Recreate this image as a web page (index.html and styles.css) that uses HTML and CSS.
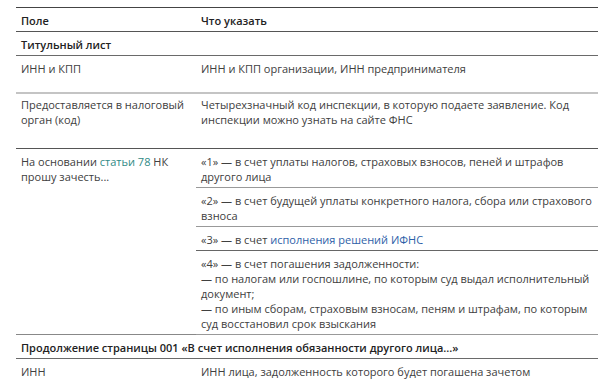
FILE: index.html
```html
<!DOCTYPE html>
<html lang="ru">
<head>
<meta charset="utf-8">
<link rel="stylesheet" href="styles.css">
</head>
<body>
<table class="tbl">
  <colgroup><col class="c1"><col class="c2"></colgroup>
  <thead>
    <tr class="head"><th>Поле</th><th>Что указать</th></tr>
  </thead>
  <tbody>
    <tr class="section"><td colspan="2">Титульный лист</td></tr>
    <tr class="tall"><td>ИНН и КПП</td><td>ИНН и КПП организации, ИНН предпринимателя</td></tr>
    <tr class="tall light"><td>Предоставляется в налоговый орган (код)</td><td>Четырехзначный код инспекции, в которую подаете заявление. Код инспекции можно узнать на сайте ФНС</td></tr>
    <tr class="sub"><td rowspan="4" class="lead">На основании <a class="teal">статьи&nbsp;78</a> НК прошу зачесть...</td><td>«1» — в счет уплаты налогов, страховых взносов, пеней и штрафов другого лица</td></tr>
    <tr class="sub"><td>«2» — в счет будущей уплаты конкретного налога, сбора или страхового взноса</td></tr>
    <tr class="sub dark"><td>«3» — в счет <a class="blue">исполнения решений ИФНС</a></td></tr>
    <tr class="sub"><td>«4» — в счет погашения задолженности:<br>— по налогам или госпошлине, по которым суд выдал исполнительный документ;<br>— по иным сборам, страховым взносам, пеням и штрафам, по которым суд восстановил срок взыскания</td></tr>
    <tr class="section"><td colspan="2">Продолжение страницы 001 «В счет исполнения обязанности другого лица...»</td></tr>
    <tr class="tall last"><td>ИНН</td><td>ИНН лица, задолженность которого будет погашена зачетом</td></tr>
  </tbody>
</table>
</body>
</html>
```
FILE: styles.css
```css
html, body { margin: 0; padding: 0; background: #fff; }
body { padding: 7px 0 0 16px; font-family: "Open Sans", "Liberation Sans", sans-serif; font-size: 11px; color: #404040; }
.tbl { width: 100%; border-collapse: collapse; border-top: 1px solid #444; }
.c1 { width: 180px; }
.tbl th, .tbl td { text-align: left; vertical-align: top; padding: 5px 4px 3px 5px; line-height: 15px; }
.tbl th { font-weight: 600; color: #222; }
.head { border-bottom: 1px solid #555; }
.section td { font-weight: 600; color: #222; }
.section { border-bottom: 1px solid #6a6a6a; }
.tall td { padding-bottom: 16px; }
.tall.light { border-top: 2px solid #c4c4c4; border-bottom: 1px solid #555; }
.tall.light td { padding-top: 3px; padding-bottom: 21px; }
.sub td { border-bottom: 1px solid #999; }
.sub.dark td { border-bottom: 1px solid #666; }
.sub td.lead { border-bottom: 1px solid #888; }
.last { border-bottom: none; }
.teal { color: #2f8a86; }
.blue { color: #2e5fa8; }
```
